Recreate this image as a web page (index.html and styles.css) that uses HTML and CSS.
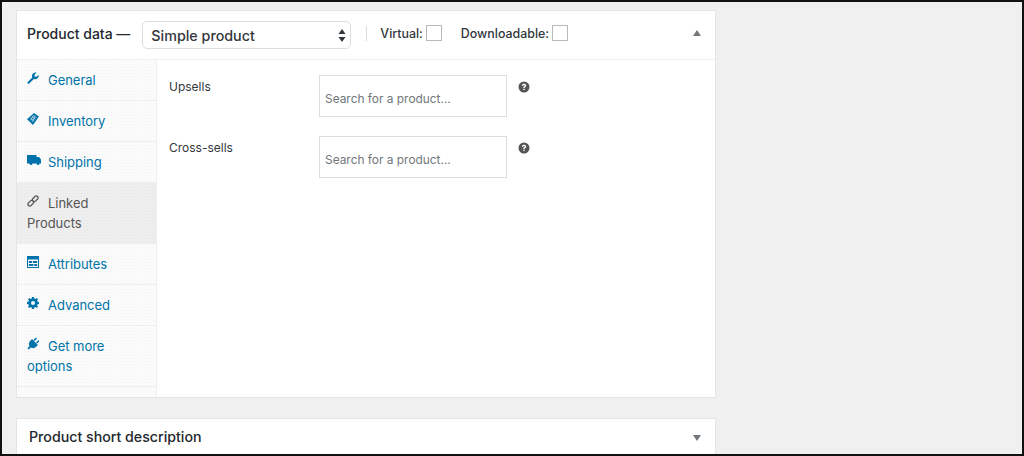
FILE: index.html
```html
<!DOCTYPE html>
<html lang="en">
<head>
<meta charset="utf-8">
<title>Product data</title>
<link rel="stylesheet" href="styles.css">
</head>
<body>
<main class="frame">
  <section class="panel">
    <header class="head">
      <h2 class="title">Product data —</h2>
      <div class="select"><span>Simple product</span>
        <svg class="updown" width="8" height="13" viewBox="0 0 8 13"><path d="M4 0l3.500 5h-7zM4 13L.5 8h7z"/></svg>
      </div>
      <span class="sep"></span>
      <label class="check first">Virtual:<span class="box"></span></label>
      <label class="check">Downloadable:<span class="box"></span></label>
      <svg class="toggle" width="8" height="6" viewBox="0 0 8 6"><path d="M4 0l4 6H0z"/></svg>
    </header>
    <div class="body">
      <nav class="tabs">
        <a class="tab"><svg class="ico" viewBox="0 0 12 12"><path d="M.6 10.200L5.200 5.400C4.700 3.800 5 2.500 6 1.500 7 .6 8.300.3 9.500.7L7.500 2.700l.3 1.700 1.700.3 2-2c.4 1.300.1 2.500-.9 3.500-1 1-2.200 1.200-3.700.7L2.200 11.500c-.4.400-1.100.400-1.500 0-.5-.4-.5-.9-.1-1.300z"/></svg>General</a>
        <a class="tab"><svg class="ico" viewBox="0 0 13 13"><path d="M7.500 0L13 3.800 6.500 13 0 6.800z"/><path class="grid" d="M6.800 2.800L10.300 5M5.300 4.300L9 6.800M3.800 5.800L7.800 8.500M5.500 9.800L8.600 3.800M3.800 8L7 2.500"/></svg>Inventory</a>
        <a class="tab"><svg class="ico wide" viewBox="0 0 14 11"><path d="M0 .5h9.500v2H12L14 5v4h-1.500a1.500 1.500 0 0 1-3 0h-4a1.500 1.500 0 0 1-3 0H0z"/></svg>Shipping</a>
        <a class="tab active"><svg class="ico link" viewBox="0 0 12 12"><rect x="5" y="2" width="6.500" height="3.600" rx="1.800" transform="rotate(-45 8.200 3.800)"/><rect x=".5" y="6.400" width="6.500" height="3.600" rx="1.800" transform="rotate(-45 3.800 8.200)"/></svg>Linked<br>Products</a>
        <a class="tab"><svg class="ico" viewBox="0 0 12 12"><path fill-rule="evenodd" d="M0 0h12v12H0zM1 3.500V11h10V3.500zM1.800 5h3.400v2H1.800zM6 5h4.200v2H6zM1.800 8h4.700v2H1.800zM7.300 8h2.900v2H7.300z"/></svg>Attributes</a>
        <a class="tab"><svg class="ico" viewBox="0 0 12 12"><path fill-rule="evenodd" d="M5 0h2l.3 1.500 1.100.5L9.700 1.100l1.300 1.300-.9 1.300.5 1.100L12 5v2l-1.400.3-.5 1.100.9 1.300-1.300 1.300-1.300-.9-1.100.5L7 12H5l-.3-1.400-1.100-.5-1.300.9L1 9.700l.9-1.300-.5-1.100L0 7V5l1.400-.2.500-1.100L1 2.400 2.300 1.100l1.300.9 1.100-.5zM6 4a2 2 0 1 0 0 4 2 2 0 0 0 0-4z"/></svg>Advanced</a>
        <a class="tab"><svg class="ico" viewBox="0 0 12 12"><g transform="rotate(45 6 6)"><path d="M3.400-.8h1.500v3.600H3.400zM7.100-.8h1.500v3.600H7.100zM1.800 3.200h8.400v2.600a4.200 4.200 0 0 1-3.300 4.100V13H5.100V9.900a4.200 4.200 0 0 1-3.300-4.100z"/></g></svg>Get more<br>options</a>
      </nav>
      <div class="fields">
        <div class="field">
          <label class="lbl">Upsells</label>
          <div class="search">Search for a product…</div>
          <svg class="help" viewBox="0 0 12 12"><circle cx="6" cy="6" r="5.500"/><path class="q" d="M3.900 4.700C4 3.400 4.900 2.800 6.100 2.800c1.200 0 2.100.7 2.100 1.700 0 .8-.4 1.200-1 1.600-.4.300-.5.400-.5.900H5.300c0-.9.200-1.300.8-1.700.4-.3.700-.5.700-.8 0-.3-.3-.6-.7-.6-.5 0-.8.300-.9.800zM5.300 7.800h1.400v1.300H5.300z"/></svg>
        </div>
        <div class="field">
          <label class="lbl">Cross-sells</label>
          <div class="search">Search for a product…</div>
          <svg class="help" viewBox="0 0 12 12"><circle cx="6" cy="6" r="5.500"/><path class="q" d="M3.900 4.700C4 3.400 4.900 2.800 6.100 2.800c1.200 0 2.100.7 2.100 1.700 0 .8-.4 1.200-1 1.600-.4.300-.5.400-.5.900H5.300c0-.9.200-1.300.8-1.700.4-.3.700-.5.700-.8 0-.3-.3-.6-.7-.6-.5 0-.8.300-.9.800zM5.300 7.800h1.400v1.300H5.300z"/></svg>
        </div>
      </div>
    </div>
  </section>
  <section class="panel closed">
    <h2 class="title wide-title">Product short description</h2>
    <svg class="toggle" width="8" height="6" viewBox="0 0 8 6"><path d="M4 6L0 0h8z"/></svg>
  </section>
</main>
</body>
</html>
```
FILE: styles.css
```css
* { box-sizing: border-box; }
html, body { margin: 0; height: 100%; }
body { overflow: hidden; font-family: Inter, "Liberation Sans", sans-serif; color: #32373c; }
.frame {
  width: 1024px; height: 456px; overflow: hidden;
  background: #f0f0f0;
  border: 2px solid #111;
  padding: 8px 0 0 14px;
}
.panel { width: 700px; background: #fff; border: 1px solid #e5e5e5; }
.head { height: 49px; display: flex; align-items: center; padding: 0 14px 0 10px; border-bottom: 1px solid #eee; }
.title { margin: 0; font-size: 14px; font-weight: 500; color: #23282d; white-space: nowrap; }
.wide-title { font-size: 14.200px; }
.head .title { margin-top: -3px; }
.select {
  width: 209px; height: 28px; margin-left: 12px; padding: 0 4px 0 8px;
  display: flex; align-items: center; justify-content: space-between;
  border: 1px solid #ddd; border-radius: 5px; font-size: 14.300px; font-weight: 500; color: #32373c;
}
.updown { fill: #32373c; }
.sep { width: 1px; height: 15px; margin: -4px 13px 0 15px; background: #ddd; }
.check { display: flex; align-items: center; margin-top: -3px; font-size: 12.400px; font-weight: 500; color: #32373c; margin-left: 19px; }
.check.first { margin-left: 0; }
.box { width: 16px; height: 16px; margin: -1px 0 0 3px; background: #fff; border: 1px solid #b4b9be; }
.toggle { fill: #72777c; margin-left: auto; margin-top: -4px; }
.body { display: flex; height: 337px; }
.tabs {
  width: 140px; flex: none; padding-bottom: 10px; border-right: 1px solid #eee;
  background: #fafbfa radial-gradient(circle, #f1f4ef 0.7px, transparent 0.8px) 0 0 / 3px 3px;
}
.tab { display: block; padding: 10px; line-height: 20px; font-size: 13px; letter-spacing: -0.03px; color: #0073aa; border-bottom: 1px solid #eee; }
.tab.active { background: #eee radial-gradient(circle, #e6e6e6 0.7px, transparent 0.8px) 0 0 / 3px 3px; color: #555; border-bottom-color: #eee; }
.ico { width: 12px; height: 12px; margin-right: 9px; fill: currentColor; vertical-align: -0.5px; position: relative; top: -2px; }
.ico.wide { width: 14px; margin-right: 7px; }
.ico.link { fill: none; stroke: currentColor; stroke-width: 1.200; }
.ico .grid { fill: none; stroke: #cfe3ee; stroke-width: .8; }
.fields { flex: 1; padding: 15px 0 0 12px; display: flex; flex-direction: column; gap: 19px; }
.field { display: flex; align-items: flex-start; }
.lbl { width: 150px; flex: none; font-size: 12px; line-height: 24px; color: #32373c; }
.search { width: 188px; height: 42px; padding: 12px 0 0 5px; line-height: 22px; font-size: 11.900px; color: #72777c; border: 1px solid #ddd; }
.help { width: 12px; height: 12px; margin: 6px 0 0 11px; fill: #555; }
.help .q { fill: #fff; }
.closed { height: 60px; margin-top: 20px; display: flex; align-items: flex-start; justify-content: space-between; padding: 9px 14px 0 12px; }
.closed .toggle { margin: 7px 0 0; }
```
